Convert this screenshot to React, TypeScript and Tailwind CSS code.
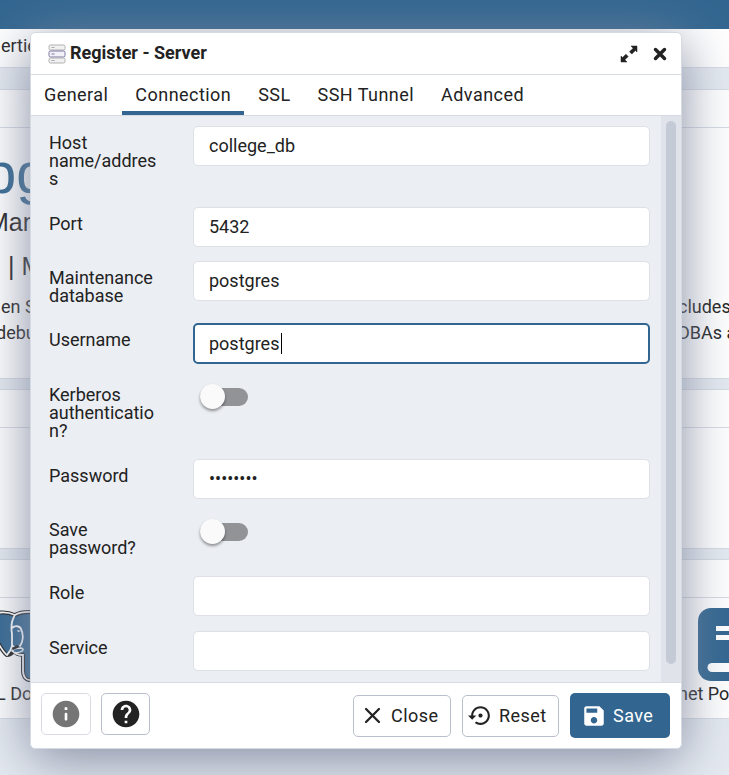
import { useState } from 'react';

const tabs = ['General', 'Connection', 'SSL', 'SSH Tunnel', 'Advanced'];

function ServerIcon() {
  return (
    <svg className="h-5 w-[18px] shrink-0" viewBox="0 0 18 20" fill="none" aria-hidden="true">
      <rect x="1" y="1" width="16" height="5" rx="1.5" fill="#f1f1f1" stroke="#b0b0b3" />
      <rect x="1" y="7" width="16" height="6" rx="1.5" fill="#f2f1f8" stroke="#7d76a3" />
      <rect x="1" y="14" width="16" height="5" rx="1.5" fill="#f1f1f1" stroke="#b0b0b3" />
      <path d="M3.500 3.500h3M3.500 16.500h3" stroke="#a9a9ad" />
      <path d="M3.500 10h3" stroke="#7d76a3" />
    </svg>
  );
}

function ExpandIcon() {
  return (
    <svg className="size-[18px]" viewBox="0 0 18 18" fill="#222" aria-hidden="true">
      <path d="M11 1h6v6l-1.600-1.500-3.600 3.600-2.300-2.300 3.600-3.600z" stroke="#222" strokeWidth=".5" strokeLinejoin="round" />
      <path d="M7 17H1v-6l1.600 1.500 3.300-3.300 2.300 2.300-3.300 3.300z" stroke="#222" strokeWidth=".5" strokeLinejoin="round" />
    </svg>
  );
}

function CrossIcon() {
  return (
    <svg className="size-[14px]" viewBox="0 0 14 14" fill="none" stroke="#222" aria-hidden="true">
      <path d="M2.500 2.500l9 9M11.500 2.500l-9 9" strokeWidth="3.500" strokeLinecap="round" />
    </svg>
  );
}

function InfoIcon() {
  return (
    <svg className="size-8" viewBox="0 0 24 24" fill="#757575" aria-hidden="true">
      <path d="M12 2C6.480 2 2 6.480 2 12s4.480 10 10 10 10-4.480 10-10S17.520 2 12 2zm0 15c-.55 0-1-.45-1-1v-4c0-.55.45-1 1-1s1 .45 1 1v4c0 .55-.45 1-1 1zm1-8h-2V7h2v2z" />
    </svg>
  );
}

function HelpIcon() {
  return (
    <svg className="size-8" viewBox="0 0 24 24" fill="#222" aria-hidden="true">
      <path d="M12 2C6.480 2 2 6.480 2 12s4.480 10 10 10 10-4.480 10-10S17.520 2 12 2zm1 17h-2v-2h2v2zm2.070-7.750-.9.920C13.450 12.900 13 13.500 13 15h-2v-.5c0-1.100.450-2.100 1.170-2.830l1.240-1.260c.37-.36.590-.86.590-1.410 0-1.100-.9-2-2-2s-2 .9-2 2H8c0-2.210 1.790-4 4-4s4 1.790 4 4c0 .88-.36 1.680-.93 2.250z" />
    </svg>
  );
}

function CloseIcon() {
  return (
    <svg className="size-[25px]" viewBox="0 0 24 24" fill="none" stroke="currentColor" aria-hidden="true">
      <path d="M5.800 5.800l12.400 12.400M18.200 5.800L5.800 18.200" strokeWidth="2.200" strokeLinecap="round" />
    </svg>
  );
}

function ResetIcon() {
  return (
    <svg className="size-[25px]" viewBox="0 0 24 24" fill="currentColor" aria-hidden="true">
      <path d="M14 12c0-1.100-.9-2-2-2s-2 .9-2 2 .9 2 2 2 2-.9 2-2zm-2-9c-4.970 0-9 4.030-9 9H0l4 4 4-4H5c0-3.870 3.130-7 7-7s7 3.130 7 7-3.130 7-7 7c-1.510 0-2.910-.49-4.060-1.300l-1.420 1.440C8.040 20.300 9.940 21 12 21c4.970 0 9-4.030 9-9s-4.030-9-9-9z" />
    </svg>
  );
}

function SaveIcon() {
  return (
    <svg className="size-[26px]" viewBox="0 0 24 24" fill="currentColor" aria-hidden="true">
      <path d="M17 3H5c-1.110 0-2 .9-2 2v14c0 1.100.890 2 2 2h14c1.100 0 2-.9 2-2V7l-4-4zm-5 16c-1.660 0-3-1.340-3-3s1.340-3 3-3 3 1.340 3 3-1.340 3-3 3zm3-10H5V5h10v4z" />
    </svg>
  );
}

function ElephantLogo() {
  return (
    <svg className="h-[74px] w-16 shrink-0" viewBox="0 0 64 74" aria-hidden="true">
      <path
        d="M-10 8C-5 4 6 3 15 7c6-4 20-4 40 0v65H32c-6 1-9-3-9-10V47c-4 0-7-1-9-4-2 2-5 4-7 4C1 43-4 30-10 20z"
        fill="#326690"
        stroke="#222"
        strokeWidth="4"
        strokeLinejoin="round"
      />
      <path
        d="M-10 8C-5 4 6 3 15 7c6-4 20-4 40 0v65H32c-6 1-9-3-9-10V47c-4 0-8-1-10-4M15 7c-4 6-4 13-3 19v12c-1 4-3 7-5 9C1 43-4 30-10 20M12 20c3-3 8-2 9 1 3 6 2 13-1 17-3 3-6 2-8-1"
        fill="none"
        stroke="#fff"
        strokeWidth="1.800"
      />
      <path d="M12 43c3-4 6-2 9-3 2 0 3 2 1 3-3 2-7 2-10 0z" fill="#326690" stroke="#fff" strokeWidth="1.500" />
      <path d="M12 40l5-3 3 2-7 3z" fill="#222" />
      <path d="M17 22l4 1-3 1z" fill="#fff" />
    </svg>
  );
}

function BookLogo() {
  return (
    <svg className="h-[74px] w-16 shrink-0" viewBox="0 0 64 74" aria-hidden="true">
      <rect width="64" height="73" rx="13" fill="#326690" />
      <path d="M18 18h46v5H18zM18 27h46v5H18z" fill="#fff" />
      <path d="M64 55H14a4.500 4.500 0 0 0 0 9h50z" fill="#fff" />
    </svg>
  );
}

function Card({ className, children }: { className: string; children?: React.ReactNode }) {
  return (
    <section className={`border-y border-[#d5dae3] bg-white ${className}`}>
      <div className="h-[38px] border-b border-[#d5dae3]" />
      {children}
    </section>
  );
}

function Backdrop() {
  return (
    <div className="min-h-screen overflow-hidden bg-[#e5eaf1]" aria-hidden="true">
      <div className="h-[29px] bg-[#326690]" />
      <div className="flex h-[39px] items-center border-b border-[#d5dae3] bg-white px-px pb-1">ertie</div>
      <div className="h-[21px]" />
      <Card className="h-[290px]">
        <div className="-ml-4 pt-3 font-['Liberation_Sans',Arial,sans-serif]">
          <div className="text-[58px] leading-[66px] text-[#326690]">pg</div>
          <div className="pl-1 text-[25px] leading-[32px]">Man</div>
          <div className="mt-3 pl-6 text-[25px] leading-[32px]">| M</div>
        </div>
        <div className="mt-3 flex justify-between leading-[26px]">
          <div>
            <div className="pl-px">en S</div>
            <div className="-ml-1">debu</div>
          </div>
          <div className="w-[51px] whitespace-nowrap">
            <div>cludes</div>
            <div>DBAs a</div>
          </div>
        </div>
      </Card>
      <div className="h-[10px]" />
      <Card className="h-[160px]" />
      <div className="h-[10px]" />
      <Card className="h-[160px]">
        <div className="mt-[10px] flex justify-between leading-6">
          <div className="flex flex-col">
            <ElephantLogo />
            <span className="-ml-1">L Do</span>
          </div>
          <div className="flex w-[51px] flex-col">
            <div className="pl-5"><BookLogo /></div>
            <span className="whitespace-nowrap">net Po</span>
          </div>
        </div>
      </Card>
    </div>
  );
}

interface FieldProps {
  id: string;
  label: string;
  value?: string;
  type?: string;
  height: string;
  focused?: boolean;
}

function Field({ id, label, value = '', type = 'text', height, focused = false }: FieldProps) {
  return (
    <div className={`flex shrink-0 items-start ${height}`}>
      <label htmlFor={id} className="w-[110px] shrink-0 pt-2 leading-[18px] [overflow-wrap:anywhere]">
        {label}
      </label>
      <div className="relative ml-[34px] flex flex-1">
        <input
          id={id}
          type={type}
          defaultValue={value}
          className="h-10 w-full rounded-[5px] border border-[#dde0e6] bg-white px-[15px] pb-[2px] outline-none data-[focused=true]:h-[41px] data-[focused=true]:border-2 data-[focused=true]:border-[#326690] data-[focused=true]:px-[14px] data-[focused=true]:pb-0"
          data-focused={focused}
        />
        {focused && <span className="absolute left-[88px] top-[10px] h-[21px] w-px bg-black" />}
      </div>
    </div>
  );
}

function Toggle({ id, label, height }: { id: string; label: string; height: string }) {
  return (
    <div className={`flex shrink-0 items-start ${height}`}>
      <label htmlFor={id} className="w-[110px] shrink-0 pt-2 leading-[18px] [overflow-wrap:anywhere]">
        {label}
      </label>
      <input
        id={id}
        type="checkbox"
        role="switch"
        className="ml-[41px] mt-[10px] h-[18px] w-12 appearance-none rounded-full bg-[#929397] before:-mt-1 before:block before:size-[25px] before:rounded-full before:bg-[#fafafa] before:shadow-[0_2px_3px_rgba(0,0,0,0.4)] checked:before:ml-6"
      />
    </div>
  );
}

export default function App() {
  const [active, setActive] = useState('Connection');
  return (
    <div className="font-[Roboto,'Liberation_Sans',sans-serif] text-lg text-[#222]">
      <Backdrop />
      <div className="absolute inset-0 flex items-start overflow-hidden pb-6 pl-[30px] pr-[47px] pt-8">
        <div
          role="dialog"
          aria-labelledby="dialog-title"
          className="flex min-w-0 flex-1 flex-col rounded-[5px] border border-[#d5dae3] bg-white shadow-[0_10px_54px_#838a9f]"
        >
          <header className="flex h-[42px] items-center border-b border-[#d5dae3] pl-[17px] pr-[14px]">
            <ServerIcon />
            <h1 id="dialog-title" className="ml-1 flex-1 pb-[2px] font-bold">Register - Server</h1>
            <button aria-label="Maximize"><ExpandIcon /></button>
            <button aria-label="Close dialog" className="ml-[15px]"><CrossIcon /></button>
          </header>
          <div role="tablist" className="flex h-[41px] gap-px border-b border-[#d5dae3]">
            {tabs.map((tab) => (
              <button
                key={tab}
                role="tab"
                aria-selected={tab === active}
                onClick={() => setActive(tab)}
                className="border-b-4 border-transparent px-[13px] pt-1 tracking-wide aria-selected:border-[#326690]"
              >
                {tab}
              </button>
            ))}
          </div>
          <div className="flex h-[566px] bg-[#ebeef3]">
            <form className="flex min-w-0 flex-1 flex-col overflow-hidden pb-[11px] pl-[18px] pr-[11px] pt-[10px]">
              <Field id="host" label="Host name/address" value="college_db" height="h-[81px]" />
              <Field id="port" label="Port" value="5432" height="h-[54px]" />
              <Field id="db" label="Maintenance database" value="postgres" height="h-[62px]" />
              <Field id="user" label="Username" value="postgres" height="h-[55px]" focused />
              <Toggle id="kerberos" label="Kerberos authentication?" height="h-[81px]" />
              <Field id="password" label="Password" value="postgres" type="password" height="h-[54px]" />
              <Toggle id="save-password" label="Save password?" height="h-[63px]" />
              <Field id="role" label="Role" height="h-[55px]" />
              <Field id="service" label="Service" height="h-10" />
            </form>
            <div className="w-5 bg-[#e0e3ea] px-[5px] pb-[18px] pt-[5px]">
              <div className="h-full rounded-full bg-[#c4cad6]" />
            </div>
          </div>
          <footer className="flex h-[66px] items-center border-t border-[#d5dae3] pl-[10px] pr-[11px] tracking-wide">
            <button aria-label="SQL info" disabled className="mb-1 flex h-[42px] w-[50px] items-center justify-center rounded-[5px] border border-[#d8dbe4]"><InfoIcon /></button>
            <button aria-label="Help" className="mb-1 ml-[10px] flex h-[42px] w-[49px] items-center justify-center rounded-[5px] border border-[#babfcd]"><HelpIcon /></button>
            <button className="ml-auto flex h-[42px] w-[98px] items-center gap-[6px] rounded-[5px] border border-[#babfcd] pl-[6px]"><CloseIcon />Close</button>
            <button className="ml-[11px] flex h-[42px] w-[97px] items-center gap-[6px] rounded-[5px] border border-[#babfcd] pl-[5px]"><ResetIcon />Reset</button>
            <button className="ml-[11px] flex h-[45px] w-[100px] items-center gap-[6px] rounded-[5px] bg-[#326690] pl-[11px] text-white"><SaveIcon />Save</button>
          </footer>
        </div>
      </div>
    </div>
  );
}
